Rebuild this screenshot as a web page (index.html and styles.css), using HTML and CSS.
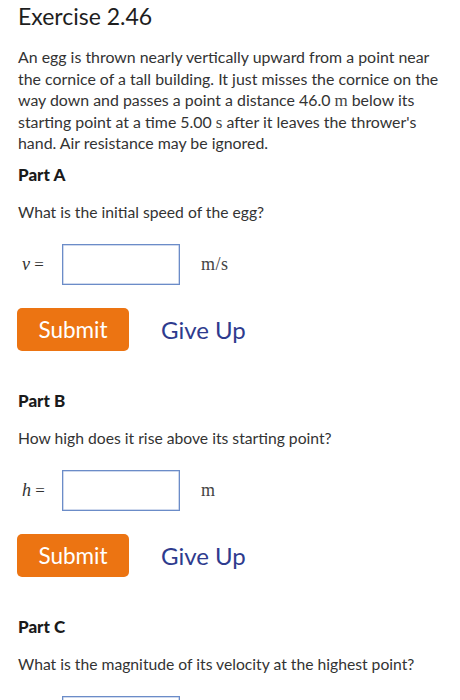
FILE: index.html
```html
<!DOCTYPE html>
<html>
<head>
<meta charset="utf-8">
<link rel="stylesheet" href="styles.css">
</head>
<body>
<div class="page">
  <h1 class="title">Exercise 2.46</h1>
  <p class="intro">An egg is thrown nearly vertically upward from a point near<br>the cornice of a tall building. It just misses the cornice on the<br>way down and passes a point a distance 46.0 <span class="unit">m</span> below its<br>starting point at a time 5.00 <span class="unit">s</span> after it leaves the thrower's<br>hand. Air resistance may be ignored.</p>

  <section class="part">
    <h2 class="part-title">Part A</h2>
    <p class="question">What is the initial speed of the egg?</p>
    <div class="answer">
      <span class="var"><i>v</i> =</span>
      <span class="box"></span>
      <span class="units">m/s</span>
    </div>
    <div class="actions">
      <span class="submit">Submit</span>
      <span class="giveup">Give Up</span>
    </div>
  </section>

  <section class="part">
    <h2 class="part-title">Part B</h2>
    <p class="question">How high does it rise above its starting point?</p>
    <div class="answer">
      <span class="var"><i>h</i> =</span>
      <span class="box"></span>
      <span class="units">m</span>
    </div>
    <div class="actions">
      <span class="submit">Submit</span>
      <span class="giveup">Give Up</span>
    </div>
  </section>

  <section class="part">
    <h2 class="part-title">Part C</h2>
    <p class="question">What is the magnitude of its velocity at the highest point?</p>
    <div class="answer">
      <span class="var"></span>
      <span class="box"></span>
    </div>
  </section>
</div>
</body>
</html>
```
FILE: styles.css
```css
html, body {
  margin: 0;
  padding: 0;
  background: #ffffff;
  overflow: hidden;
}
.page {
  width: 442px;
  height: 700px;
  padding: 2px 0 0 18px;
  box-sizing: border-box;
  overflow: hidden;
  font-family: "Lato", "Open Sans", sans-serif;
  color: #333333;
}
.title {
  margin: 0;
  font-size: 23px;
  line-height: 28px;
  font-weight: 400;
  color: #1e1e1e;
}
.intro {
  margin: 16px 0 0 0;
  font-size: 15.9px;
  line-height: 21.5px;
  white-space: nowrap;
}
.unit {
  font-family: "Liberation Serif", serif;
  font-size: 17px;
  line-height: 1;
  color: #444;
}
.part {
  margin-top: 11px;
}
.part + .part {
  margin-top: 40px;
}
.part-title {
  margin: 0;
  font-size: 17px;
  line-height: 20px;
  font-weight: 900;
  color: #1a1a1a;
}
.question {
  margin: 17px 0 0 0;
  font-size: 15.7px;
  line-height: 20px;
}
.answer {
  margin-top: 22px;
  display: flex;
  align-items: center;
}
.var {
  width: 40px;
  padding-left: 4px;
  font-family: "Liberation Serif", serif;
  font-size: 17px;
  color: #333;
}
.var i {
  font-size: 18px;
}
.box {
  width: 116px;
  height: 39px;
  border: 1px solid #6b8cc8;
  box-shadow: inset 0 0 0 0.5px #9fb4dc;
}
.units {
  margin-left: 21px;
  font-family: "Liberation Serif", serif;
  font-size: 18px;
  letter-spacing: 0.5px;
  color: #444;
}
.actions {
  margin-top: 23px;
  display: flex;
  align-items: center;
}
.submit {
  width: 112px;
  height: 43px;
  display: flex;
  align-items: center;
  justify-content: center;
  margin-left: -1px;
  background: #ec7412;
  border-radius: 5px;
  color: #ffffff;
  font-size: 22.5px;
}
.giveup {
  margin-left: 32px;
  color: #2e3b8e;
  font-size: 24px;
}
```
